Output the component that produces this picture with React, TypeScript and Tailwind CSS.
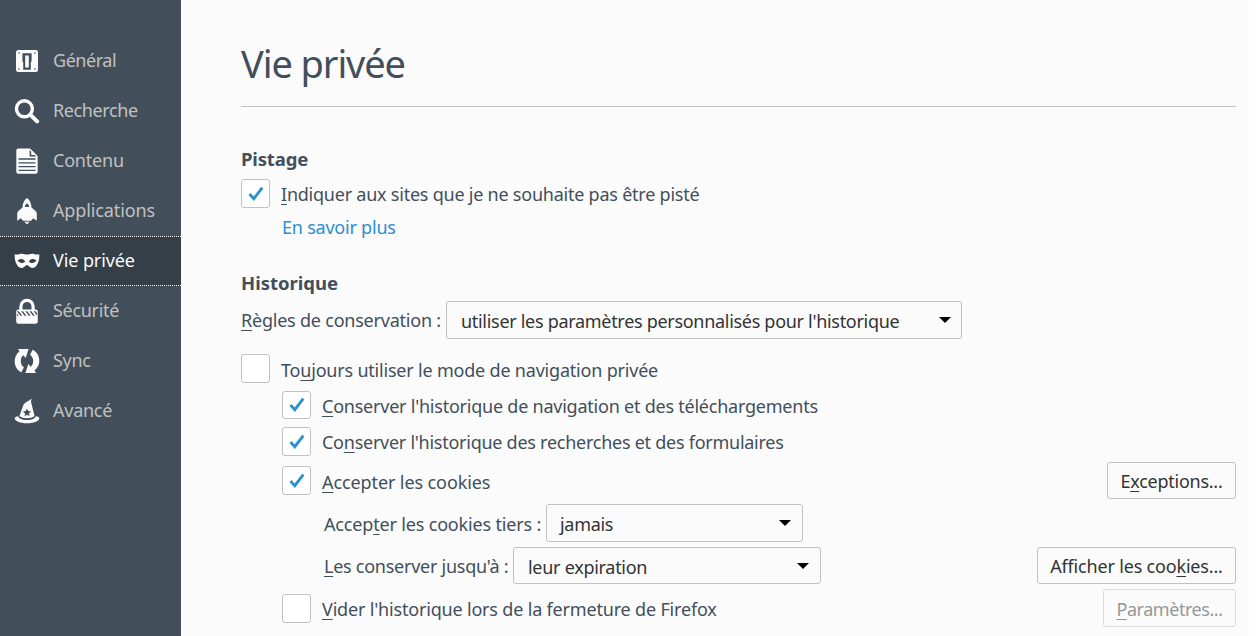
import React, { useState } from 'react';

interface NavItem {
  id: string;
  label: string;
  tracking: string;
  icon: React.ReactNode;
}

const Icon: React.FC<{ children: React.ReactNode }> = ({ children }) => (
  <svg viewBox="0 0 26 26" className="h-[26px] w-[26px] shrink-0 fill-[#fbfbfb]">
    {children}
  </svg>
);

const NAV_ITEMS: NavItem[] = [
  {
    id: 'general',
    label: 'Général',
    tracking: 'tracking-[-0.45px]',
    icon: (
      <Icon>
        <rect x="2" y="2" width="22" height="22" rx="2.5" />
        <path d="M8.4 5.2h9.2v8l-.8 1v7.6H9.2v-7.600l-.8-1z" fill="#424f5a" />
        <path d="M11.2 7.600h3.600v12h-3.600z" />
        <g fill="#424f5a">
          <circle cx="5" cy="5" r="0.8" />
          <circle cx="21" cy="5" r="0.8" />
          <circle cx="5" cy="21" r="0.8" />
          <circle cx="21" cy="21" r="0.8" />
        </g>
      </Icon>
    ),
  },
  {
    id: 'search',
    label: 'Recherche',
    tracking: 'tracking-[-0.38px]',
    icon: (
      <Icon>
        <circle cx="10.4" cy="10.8" r="8" fill="none" stroke="#fbfbfb" strokeWidth="3.4" />
        <path d="M16.6 17l6.5 6.4" fill="none" stroke="#fbfbfb" strokeWidth="4" strokeLinecap="round" />
      </Icon>
    ),
  },
  {
    id: 'content',
    label: 'Contenu',
    tracking: 'tracking-[-0.2px]',
    icon: (
      <Icon>
        <path d="M4.3.5H16l7.700 7.700v15.500a2 2 0 0 1-2 2H4.300a2 2 0 0 1-2-2V2.500a2 2 0 0 1 2-2z" />
        <path d="M15.600 2v6.600h6.600z" fill="#424f5a" />
        <path d="M17.200 1.700v5.300h5.300z" />
        <path d="M4.500 11h17M4.500 14.800h17M4.500 18.600h17M4.500 22.300h17" stroke="#424f5a" strokeWidth="1.3" />
      </Icon>
    ),
  },
  {
    id: 'applications',
    label: 'Applications',
    tracking: 'tracking-[-0.13px]',
    icon: (
      <Icon>
        <path d="M13 0c2.600 1.800 4.300 5 4.500 9.500l3.800 3.200c1 .9 1.500 2 1.500 3.300v6.800l-3.500-2.600-2.300 2.600H9l-2.300-2.600-3.500 2.600V16c0-1.300.5-2.400 1.500-3.300l3.800-3.200C8.700 5 10.400 1.800 13 0z" />
        <path d="M13 5.200c1 .8 1.900 2 2.200 3.900h-4.400c.3-1.900 1.200-3.100 2.200-3.900z" fill="#424f5a" />
        <path d="M10.800 23.400h4.400c0 1.200-.8 2.200-2.200 2.600-1.400-.4-2.200-1.400-2.200-2.600z" />
        <circle cx="13" cy="23.800" r="0.7" fill="#424f5a" />
      </Icon>
    ),
  },
  {
    id: 'privacy',
    label: 'Vie privée',
    tracking: 'tracking-[-0.1px]',
    icon: (
      <Icon>
        <path d="M.7 6.300c3 .6 5-.6 7.300-.6 2 0 3.300.9 5 .9s3-.9 5-.9c2.300 0 4.300 1.200 7.300.6.2 5-.8 9-3 11.600-1.400 1.500-2.900 2-4.500 2-2.200 0-3.200-2.800-4.800-2.800s-2.600 2.800-4.800 2.800c-1.600 0-3.100-.5-4.500-2C1.500 15.300.5 11.300.7 6.300z" />
        <path d="M3.600 12.600c2.200-2.300 5.800-2.200 7.600.9-2 2.200-5.700 2-7.600-.9zM22.400 12.600c-2.200-2.300-5.800-2.200-7.600.9 2 2.200 5.700 2 7.600-.9z" fill="#343f48" />
      </Icon>
    ),
  },
  {
    id: 'security',
    label: 'Sécurité',
    tracking: 'tracking-[-0.3px]',
    icon: (
      <Icon>
        <path d="M6.900 12V8.500a6.100 6.100 0 0 1 12.200 0V12" fill="none" stroke="#fbfbfb" strokeWidth="3.2" />
        <rect x="2.2" y="11.5" width="21.6" height="14.2" rx="2.2" />
        <path
          d="M3 13.300h1.800l3.400 4.400H6.400zM7.200 13.300H9l3.400 4.400h-1.800zM11.400 13.300h1.800l3.400 4.400h-1.800zM15.600 13.300h1.800l3.400 4.400H19zM19.800 13.300h1.800l1.600 2.100v2.300zM3 15.600l1.600 2.100H3z"
          fill="#424f5a"
        />
      </Icon>
    ),
  },
  {
    id: 'sync',
    label: 'Sync',
    tracking: 'tracking-[-0.3px]',
    icon: (
      <Icon>
        <path d="M4 .9h10.600l-2.900 9-2.300-2.600C7.500 8.600 6.700 10.800 6.800 13.200c.1 2.500 1.200 4.700 3.100 6.100L7.400 24.200C3.300 22.300.7 18.200.7 13.200c0-4 1.800-7.400 4.800-9.600z" />
        <path d="M22 25.100H11.400l2.900-9 2.300 2.600c1.900-1.300 2.700-3.500 2.600-5.900-.1-2.500-1.200-4.700-3.100-6.100l2.500-4.900c4.100 1.900 6.700 6 6.700 11 0 4-1.800 7.400-4.800 9.600z" />
      </Icon>
    ),
  },
  {
    id: 'advanced',
    label: 'Avancé',
    tracking: 'tracking-[-0.25px]',
    icon: (
      <Icon>
        <path d="M17.800.8c-.9 1.700-.9 3-.4 4.800l3.200 12.500c-1.800 1.500-4.600 2.200-7.600 2.200s-5.800-.7-7.600-2.200L9.200 7.600c.9-2.700 5-4.500 8.600-6.800z" />
        <path d="M13 10.400l1.200 2.700 2.900.3-2.200 2 .6 2.900-2.500-1.500-2.500 1.500.6-2.900-2.200-2 2.900-.3z" fill="#424f5a" />
        <path d="M4.300 18.200c.3 2.300 4 3.800 8.700 3.800s8.400-1.500 8.700-3.800c2.300.2 3.600 1 3.600 2 0 2.700-5.300 5-12.300 5S.7 22.900.7 20.200c0-1 1.300-1.800 3.600-2z" />
      </Icon>
    ),
  },
];

interface CheckboxProps {
  checked: boolean;
  onChange: () => void;
  children: React.ReactNode;
  className?: string;
}

const Checkbox: React.FC<CheckboxProps> = ({ checked, onChange, children, className = '' }) => (
  <label className="flex h-full items-center">
    <input type="checkbox" className="sr-only" checked={checked} onChange={onChange} />
    <span className="flex h-[29px] max-h-full w-[29px] shrink-0 items-center justify-center rounded-[3px] border border-[#c1c1c1] bg-white">
      {checked && (
        <svg viewBox="0 0 16 16" className="h-4 w-4 fill-none stroke-[#2a91cf] stroke-[2.8]">
          <path d="M1.5 8l4.3 4.7L14.3 1.6" />
        </svg>
      )}
    </span>
    <span className={`ml-[11px] whitespace-nowrap ${className}`}>{children}</span>
  </label>
);

const SelectBox: React.FC<{ value: string; className: string }> = ({ value, className }) => (
  <button
    type="button"
    className={`flex items-center justify-between rounded-[3px] border border-[#c1c1c1] bg-[#fbfbfb] text-[#333] ${className}`}
  >
    <span className="whitespace-nowrap pt-[2px]">{value}</span>
    <svg viewBox="0 0 12 6" className="h-1.5 w-3 fill-black">
      <path d="M0 0h12L6 6z" />
    </svg>
  </button>
);

const ActionButton: React.FC<{ disabled?: boolean; className: string; children: React.ReactNode }> = ({
  disabled,
  className,
  children,
}) => (
  <button
    type="button"
    disabled={disabled}
    className={`flex items-center justify-center whitespace-nowrap rounded-[3px] border border-[#c1c1c1] text-[#333] disabled:opacity-50 ${className}`}
  >
    <span>{children}</span>
  </button>
);

// Underlined access key
const Key: React.FC<{ children: string }> = ({ children }) => (
  <span className="underline decoration-1 underline-offset-[3px]">{children}</span>
);

export default function App() {
  const [active, setActive] = useState<string>('privacy');
  const [options, setOptions] = useState({
    doNotTrack: true,
    alwaysPrivate: false,
    keepHistory: true,
    keepSearches: true,
    acceptCookies: true,
    clearOnExit: false,
  });

  const toggle = (name: keyof typeof options) => () =>
    setOptions((prev) => ({ ...prev, [name]: !prev[name] }));

  return (
    <div className="flex h-[636px] w-[1256px] overflow-hidden bg-white font-['Noto_Sans',sans-serif] text-lg/6 text-[#424f5a]">
      <nav className="flex w-[181px] shrink-0 flex-col bg-[#424f5a] pt-9">
        {NAV_ITEMS.map((item) => (
          <button
            key={item.id}
            type="button"
            onClick={() => setActive(item.id)}
            className={`flex h-[50px] items-center gap-[13px] border-y border-dotted pl-[14px] ${
              active === item.id
                ? 'border-[#fbfbfb] bg-[#343f48] text-[#fbfbfb]'
                : 'border-transparent text-[#c1c1c1]'
            }`}
          >
            {item.icon}
            <span className={`pb-[2px] ${item.tracking}`}>{item.label}</span>
          </button>
        ))}
      </nav>

      <main className="flex w-[1068px] flex-col bg-[#fbfbfb] pr-[13px] pl-[60px]">
        <h1 className="flex h-[107px] items-center border-b border-[#c1c1c1] pt-5 text-[38px] tracking-[-1.1px]">
          Vie privée
        </h1>

        <section>
          <h2 className="mt-10 h-8 text-[18.5px] font-bold tracking-[-0.15px]">Pistage</h2>
          <div className="h-[29px]">
            <Checkbox checked={options.doNotTrack} onChange={toggle('doNotTrack')} className="pt-px tracking-[-0.23px]">
              <Key>I</Key>ndiquer aux sites que je ne souhaite pas être pisté
            </Checkbox>
          </div>
          <div className="flex h-[38px] items-center pl-[41px]">
            <a href="#" className="tracking-[-0.22px] text-[#2a8fd0]">En savoir plus</a>
          </div>
        </section>

        <section className="flex flex-col">
          <h2 className="mt-[25px] h-[30px] text-[18.5px] font-bold tracking-[0px]">Historique</h2>
          <div className="flex h-[38px] items-center">
            <span className="w-[205px] whitespace-nowrap tracking-[-0.22px]">
              <Key>R</Key>ègles de conservation :
            </span>
            <SelectBox
              value="utiliser les paramètres personnalisés pour l'historique"
              className="h-[38px] w-[516px] pr-[10px] pl-[14px] tracking-[-0.3px]"
            />
          </div>

          <div className="mt-[15px] h-[29px]">
            <Checkbox checked={options.alwaysPrivate} onChange={toggle('alwaysPrivate')} className="pt-[3px] tracking-[-0.2px]">
              To<Key>u</Key>jours utiliser le mode de navigation privée
            </Checkbox>
          </div>

          <div className="flex flex-col pl-[41px]">
            <div className="mt-2 h-7">
              <Checkbox checked={options.keepHistory} onChange={toggle('keepHistory')} className="pt-[2px] tracking-[-0.23px]">
                <Key>C</Key>onserver l'historique de navigation et des téléchargements
              </Checkbox>
            </div>
            <div className="mt-2 h-[29px]">
              <Checkbox checked={options.keepSearches} onChange={toggle('keepSearches')} className="pt-px tracking-[-0.26px]">
                Co<Key>n</Key>server l'historique des recherches et des formulaires
              </Checkbox>
            </div>

            <div className="mt-[6px] flex h-[37px] items-center justify-between">
              <Checkbox checked={options.acceptCookies} onChange={toggle('acceptCookies')} className="pt-[3px] tracking-[-0.1px]">
                <Key>A</Key>ccepter les cookies
              </Checkbox>
              <ActionButton className="h-[37px] w-[129px] tracking-[-0.25px]">
                E<Key>x</Key>ceptions...
              </ActionButton>
            </div>

            <div className="mt-[5px] flex h-[38px] items-center pl-[42px]">
              <span className="w-[222px] whitespace-nowrap pt-px tracking-[-0.17px]">
                Accep<Key>t</Key>er les cookies tiers :
              </span>
              <SelectBox value="jamais" className="h-[38px] w-[257px] pr-[11px] pl-[13px] tracking-[-0.3px]" />
            </div>

            <div className="mt-[5px] flex h-[37px] items-center pl-[42px]">
              <span className="w-[189px] whitespace-nowrap tracking-[-0.26px]">
                <Key>L</Key>es conserver jusqu'à :
              </span>
              <SelectBox value="leur expiration" className="h-[37px] w-[308px] pr-[11px] pl-[14px] tracking-[-0.28px]" />
              <ActionButton className="ml-auto h-[37px] w-[199px] tracking-[-0.18px]">
                Afficher les coo<Key>k</Key>ies...
              </ActionButton>
            </div>

            <div className="mt-[5px] flex h-[38px] items-center justify-between">
              <Checkbox checked={options.clearOnExit} onChange={toggle('clearOnExit')} className="pt-px tracking-[-0.18px]">
                <Key>V</Key>ider l'historique lors de la fermeture de Firefox
              </Checkbox>
              <ActionButton disabled className="h-[38px] w-[133px] pt-[2px] tracking-[-0.45px]">
                <Key>P</Key>aramètres...
              </ActionButton>
            </div>
          </div>
        </section>
      </main>
    </div>
  );
}
